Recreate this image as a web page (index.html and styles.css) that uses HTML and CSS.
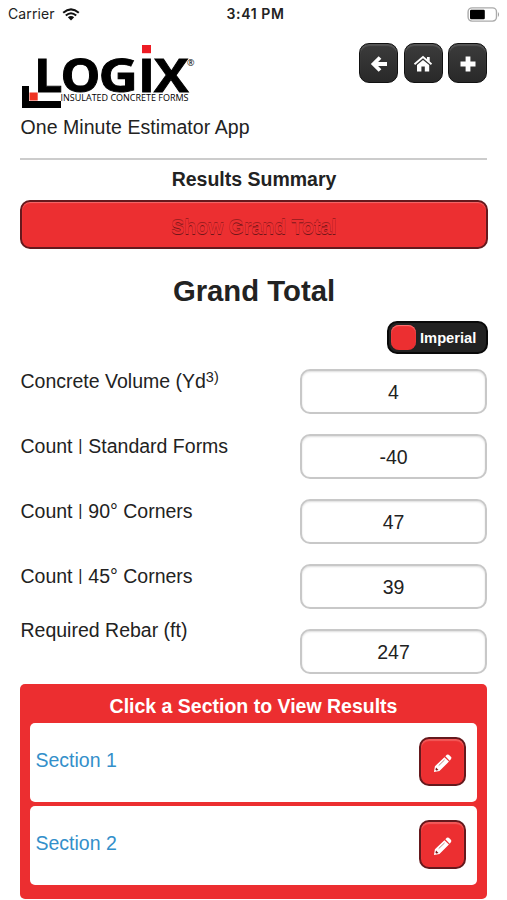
FILE: index.html
```html
<!DOCTYPE html>
<html lang="en">
<head>
<meta charset="utf-8">
<title>One Minute Estimator App</title>
<link rel="stylesheet" href="styles.css">
</head>
<body>
<svg width="0" height="0" class="defs" aria-hidden="true">
  <symbol id="pencil" viewBox="0 0 20 20">
    <path d="M1 19 L2 13 L12 3.3 L16.8 8 L6.8 18 Z M13 2.3 L14.5 .9 Q16 0 17.2 1.2 L18.8 2.8 Q20 4 18.8 5.5 L17.6 7 Z" fill="#fff"/>
    <path d="M3.2 14.2 L5.8 16.8 L3.4 17.4 L2.6 16.6 Z" fill="#7d1818"/>
    <path d="M6 12.2 L12.2 6.2" stroke="#a95a55" stroke-width=".8"/>
  </symbol>
</svg>
<div class="status">
  <div class="carrier">Carrier
    <svg width="18" height="13" viewBox="0 0 18 13"><path d="M1.200 4.800 Q9-2 16.800 4.800 M3.800 7.500 Q9 3 14.200 7.500" fill="none" stroke="#111" stroke-width="2"/><path d="M5.800 9.300 Q9 6.800 12.200 9.300 L9 12.500Z" fill="#111"/></svg>
  </div>
  <div class="time">3:41 PM</div>
  <svg class="battery" width="34" height="15" viewBox="0 0 34 15"><rect x="1.1" y=".9" width="28.4" height="13.2" rx="4" fill="#fff" stroke="#aaa" stroke-width="1.4"/><rect x="3" y="2.8" width="14.8" height="9.4" rx="1.2"/><path d="M31 5v5q2-2.500 0-5" fill="#999"/></svg>
</div>
<header class="head">
  <div class="brand">
    <svg width="176" height="66" viewBox="21 43 176 66" class="logo">
      <path d="M22 86h7v15h32v7H22z"/>
      <rect x="29.500" y="92.500" width="8.200" height="8" fill="#ee3322"/>
      <rect x="142" y="45" width="9" height="8.200" fill="#ed1c24"/>
      <g class="word">
        <text x="34" y="91.500" textLength="28.500" lengthAdjust="spacingAndGlyphs">L</text>
        <text x="60.500" y="91.500" textLength="40" lengthAdjust="spacingAndGlyphs">O</text>
        <text x="98.500" y="91.500" textLength="39.500" lengthAdjust="spacingAndGlyphs">G</text>
        <text x="138" y="91.500" textLength="17" lengthAdjust="spacingAndGlyphs">I</text>
        <text x="154" y="91.500" textLength="34.500" lengthAdjust="spacingAndGlyphs">X</text>
      </g>
      <text class="sub" x="60.500" y="101" textLength="128" lengthAdjust="spacingAndGlyphs">INSULATED CONCRETE FORMS</text>
      <text class="reg" x="187" y="66">®</text>
    </svg>
    <div class="tagline">One Minute Estimator App</div>
  </div>
  <nav class="nav">
    <button class="dark" aria-label="Back"><svg width="18" height="18" viewBox="0 0 18 18"><path d="M10 2.500 L3.500 9 L10 15.500 M4 9H17" fill="none" stroke="#fff" stroke-width="3.800"/></svg></button>
    <button class="dark" aria-label="Home"><svg width="20" height="18" viewBox="0 0 20 18"><path d="M1.500 9.200 L10 2 L18.500 9.200" fill="none" stroke="#fff" stroke-width="1.800"/><path d="M14 2h2.700v5L14 4.800zM10 5l6.200 5v6.500h-4.400V11.500H8.400v5H4V10z" fill="#fff"/></svg></button>
    <button class="dark" aria-label="Add"><svg width="18" height="18" viewBox="0 0 18 18"><path d="M9 1.500v15M1.500 9h15" stroke="#fff" stroke-width="4.800"/></svg></button>
  </nav>
</header>
<main>
  <h2 class="summary">Results Summary</h2>
  <button class="total">Show Grand Total</button>
  <h1 class="title">Grand Total</h1>
  <div class="units"><button class="toggle"><span class="knob"></span>Imperial</button></div>
  <div class="row"><label>Concrete Volume (Yd<sup>3)</sup></label><div class="field">4</div></div>
  <div class="row"><label>Count <span class="bar">|</span> Standard Forms</label><div class="field">-40</div></div>
  <div class="row"><label>Count <span class="bar">|</span> 90° Corners</label><div class="field">47</div></div>
  <div class="row"><label>Count <span class="bar">|</span> 45° Corners</label><div class="field">39</div></div>
  <div class="row rebar"><label>Required Rebar (ft)</label><div class="field">247</div></div>
  <section class="panel">
    <h3>Click a Section to View Results</h3>
    <div class="item"><a>Section 1</a><button class="edit" aria-label="Edit"><svg width="19" height="19"><use href="#pencil"/></svg></button></div>
    <div class="item"><a>Section 2</a><button class="edit" aria-label="Edit"><svg width="19" height="19"><use href="#pencil"/></svg></button></div>
  </section>
</main>
</body>
</html>
```
FILE: styles.css
```css
* { box-sizing: border-box; }
body { margin: 0; height: 900px; overflow: hidden; background: #fff; color: #222; font: 19.5px/24px "Liberation Sans", Arial, sans-serif; }
button { font: inherit; padding: 0; margin: 0; }
svg { display: block; }
.defs { position: absolute; }
.status { display: grid; grid-template-columns: 1fr auto 1fr; align-items: center; height: 28px; padding: 0 6px 0 8px; font: 14px/28px Inter, sans-serif; }
.carrier { display: flex; gap: 7px; align-items: center; letter-spacing: .1px; }
.time { font-weight: 600; letter-spacing: .6px; margin-left: 2px; }
.battery { justify-self: end; }
.head { display: flex; justify-content: space-between; margin: 0 20px 0 20px; height: 132px; border-bottom: 2px solid #ccc; padding-top: 15px; }
.logo { margin-left: 1px; }
.word { font: 700 46px "Open Sans"; stroke: #000; stroke-width: .9px; }
.sub { font: 500 8.7px "Open Sans"; }
.reg { font: 9px "Open Sans"; }
.tagline { margin: 6px 0 0 .5px; white-space: nowrap; letter-spacing: .06px; }
.nav { display: flex; gap: 5.5px; }
.dark { width: 39px; height: 40px; border: 1px solid #111; border-radius: 10px; background: linear-gradient(#3c3c3c, #292929); box-shadow: inset 0 2px 1px #555; display: flex; align-items: center; justify-content: center; padding-top: 2px; }
main { padding: 0 19px 0 20px; }
.summary { margin: 7px 0 8px; font-size: 19.5px; line-height: 25px; text-align: center; }
.total { display: block; width: 468px; height: 49px; border: 2px solid #65191d; border-radius: 10px; background: #ec2f31; color: #ec2f31; font-weight: bold; text-shadow: 0 -1px 0 #a01d20, 0 1px 0 #70171a; box-shadow: inset 0 1px 1px #f36b6c; padding-top: 4px; }
.title { margin: 24px 0 12px; font-size: 29.3px; line-height: 36px; text-align: center; }
.units { display: flex; justify-content: flex-end; }
.toggle { width: 101px; height: 33px; border: 2px solid #090909; border-radius: 10px; background: #222; color: #fff; font-weight: bold; font-size: 14.7px; display: flex; align-items: center; gap: 4px; padding-left: 2px; }
.knob { width: 25px; height: 25px; border-radius: 8px; background: #ec2f31; box-shadow: inset 0 1px 1px #f77; }
.row { display: flex; justify-content: space-between; height: 65px; }
.units + .row { margin-top: 15px; }
.row label { white-space: nowrap; padding-left: .5px; }
.row sup { font-size: 14.5px; line-height: 0; vertical-align: 6px; }
.bar { font-size: 16px; line-height: 0; vertical-align: 2px; padding: 0 .4px; }
.field { width: 187px; height: 45px; border: 2px solid #c8c8c8; border-radius: 10px; box-shadow: inset 0 1px 2px #ddd; text-align: center; line-height: 42px; margin-right: 1px; }
.rebar { height: 55px; }
.rebar label { margin-top: -11px; }
.panel { height: 214.5px; background: #ec2e30; border-radius: 5px; padding: 10px 10px 0; width: 467px; }
.panel h3 { margin: 0 0 4px; color: #fff; font-size: 19.5px; line-height: 25px; text-align: center; }
.item { height: 78.5px; background: #fff; border-radius: 5px; margin-bottom: 4.5px; display: flex; align-items: center; justify-content: space-between; padding: 0 11px 2px 5.5px; }
.item a { color: #338fca; margin-top: -3px; }
.edit { width: 47px; height: 49px; border: 2px solid #65191d; border-radius: 10px; background: #ec2f31; box-shadow: inset 0 2px 1px #f25a5a; display: flex; align-items: center; justify-content: center; padding: 5px 1px 0 0; }
```
